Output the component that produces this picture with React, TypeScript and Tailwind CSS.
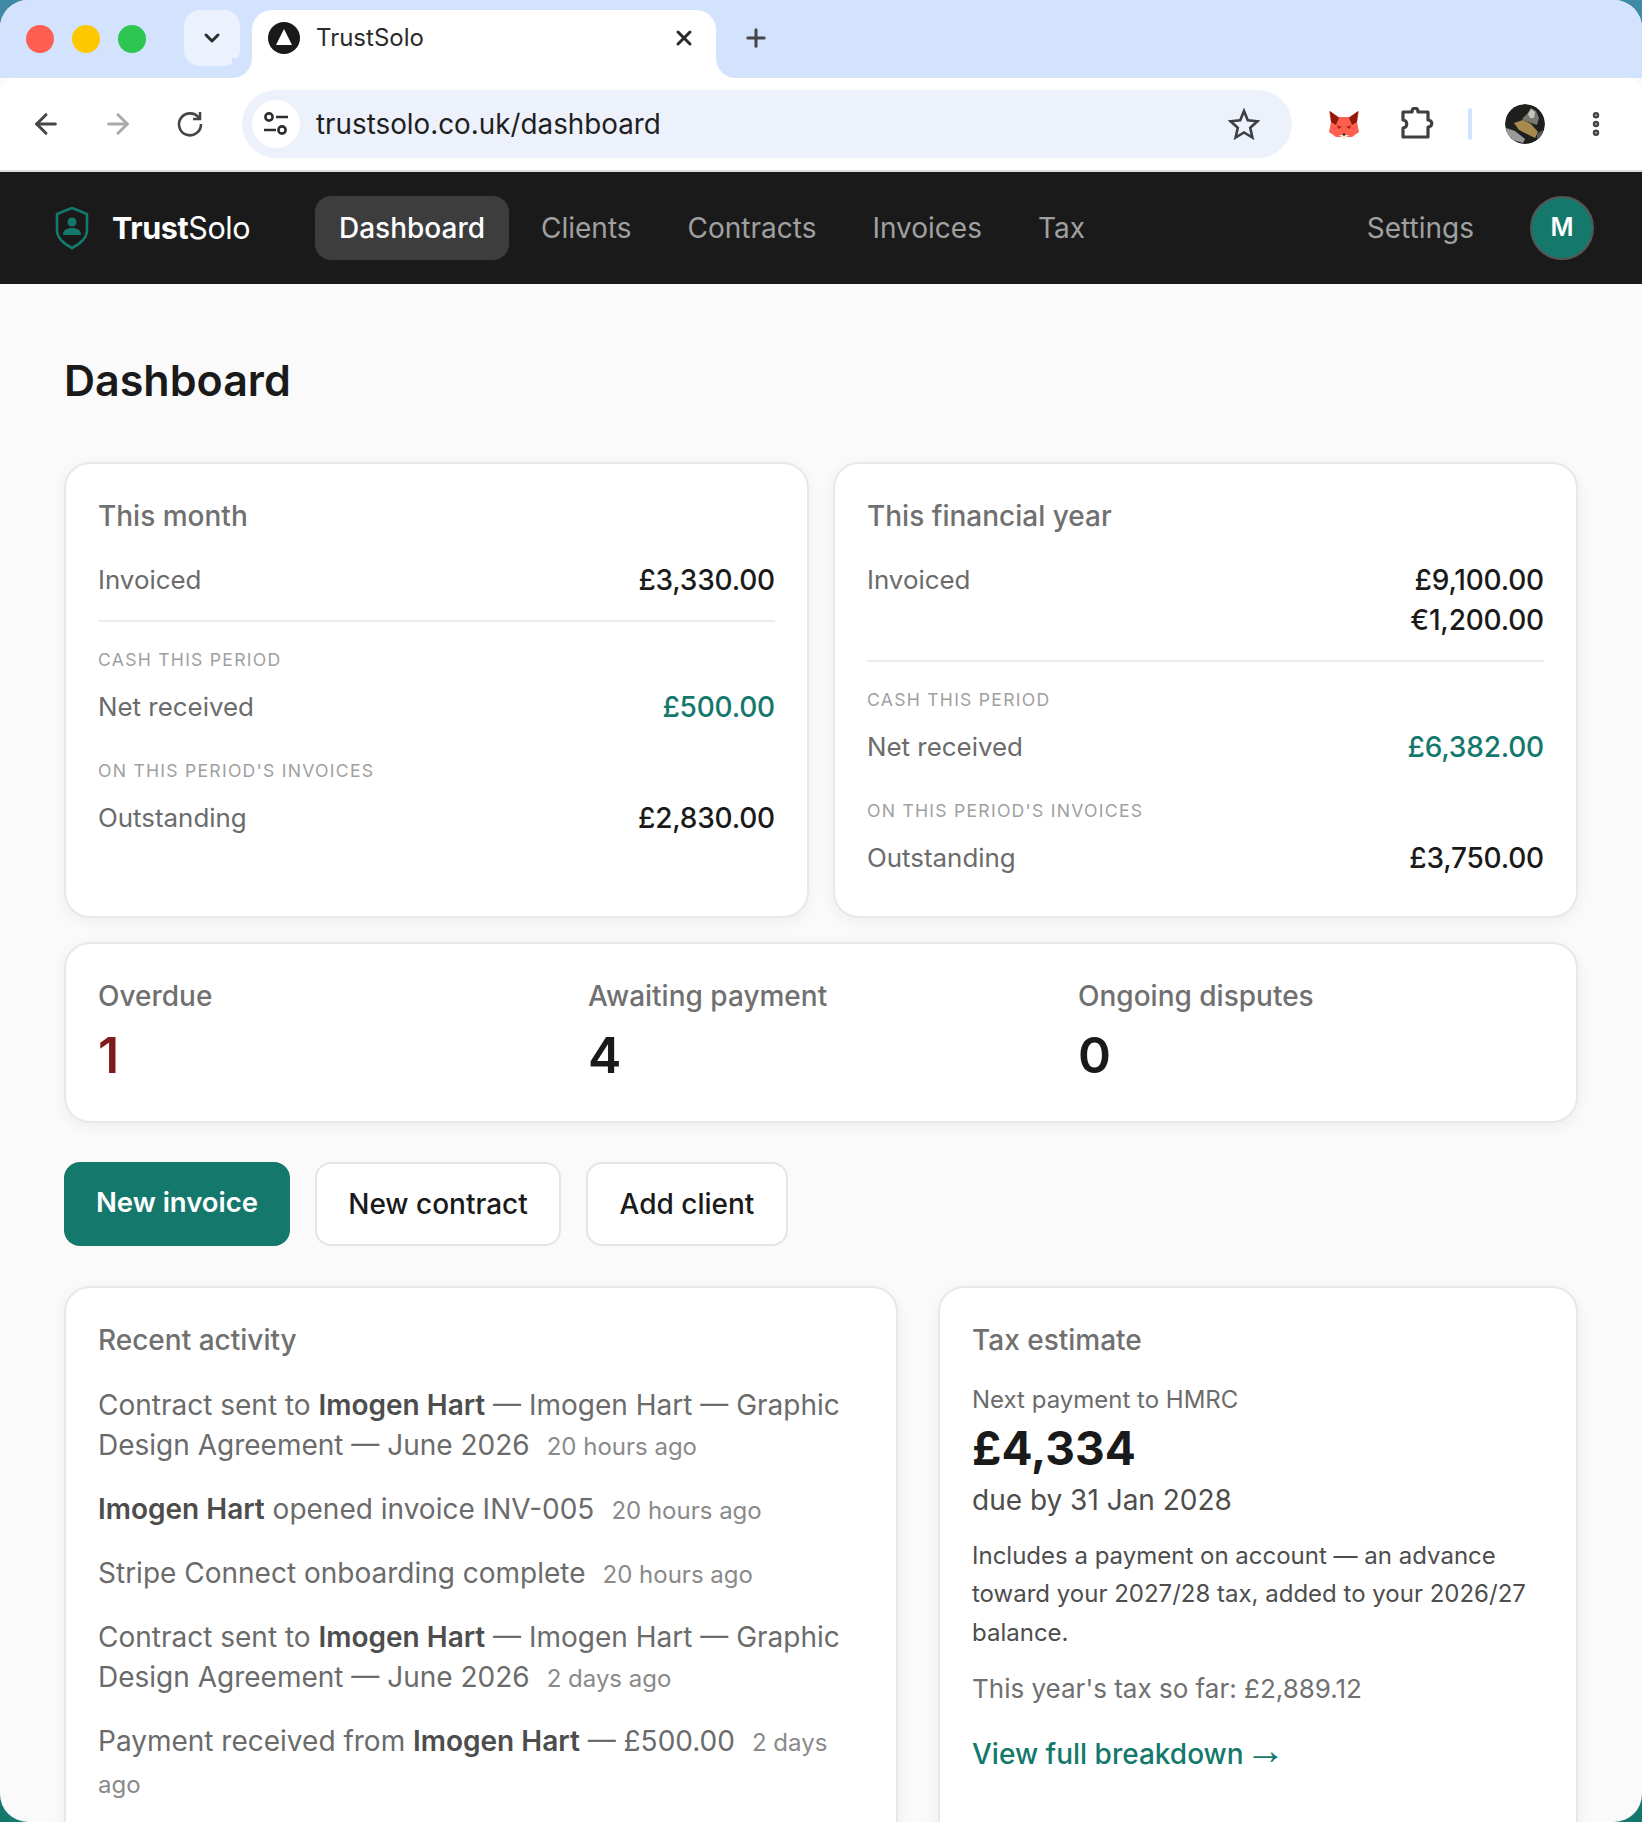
import { ArrowLeft, ArrowRight, ChevronDown, MoreVertical, Plus, X } from 'lucide-react';
import type { ReactNode } from 'react';

const sans = 'font-["Inter",sans-serif]';

const Card = ({ className = '', children }: { className?: string; children: ReactNode }) => (
  <div className={`rounded-[26px] border-2 border-[#e8e8e8] bg-white px-[32px] py-[33px] shadow-[0_4px_16px_rgba(0,0,0,0.05)] ${className}`}>{children}</div>
);

const CardTitle = ({ children }: { children: ReactNode }) => (
  <div className="text-[28px] font-medium leading-[38px] text-[#707070]">{children}</div>
);

const Row = ({ label, values, color = 'text-[#1a1a1a]' }: { label: string; values: string[]; color?: string }) => (
  <div className="flex items-start justify-between">
    <span className="text-[25.9px] leading-[40px] text-[#6b6b6b]">{label}</span>
    <div className="text-right">
      {values.map((v) => (
        <div key={v} className={`text-[28px] font-medium leading-[40px] tracking-[-0.2px] ${color}`}>{v}</div>
      ))}
    </div>
  </div>
);

const Caps = ({ children }: { children: ReactNode }) => (
  <div className="text-[17.6px] leading-[24px] tracking-[1.25px] text-[#a0a0a0]">{children}</div>
);

const PeriodCard = ({ title, invoiced, net, outstanding }: { title: string; invoiced: string[]; net: string; outstanding: string }) => (
  <Card className="h-[456px]">
    <CardTitle>{title}</CardTitle>
    <div className="mt-[25px]"><Row label="Invoiced" values={invoiced} /></div>
    <div className="mt-[20px] h-[2px] bg-[#ececec]" />
    <div className="mt-[26px]"><Caps>CASH THIS PERIOD</Caps></div>
    <div className="mt-[15px]"><Row label="Net received" values={[net]} color="text-[#14786c]" /></div>
    <div className="mt-[32px]"><Caps>ON THIS PERIOD'S INVOICES</Caps></div>
    <div className="mt-[15px]"><Row label="Outstanding" values={[outstanding]} /></div>
  </Card>
);

const Stat = ({ label, value, color = 'text-[#1a1a1a]' }: { label: string; value: string; color?: string }) => (
  <div>
    <CardTitle>{label}</CardTitle>
    <div className={`mt-[12px] text-[50px] font-semibold leading-[56px] ${color}`}>{value}</div>
  </div>
);

const Activity = ({ children, when }: { children: ReactNode; when: string }) => (
  <p className="text-[28px] leading-[40px] text-[#6b6b6b]">
    {children}
    <span className="ml-[17px] text-[24px] text-[#8a8a8a]">{when}</span>
  </p>
);

const Strong = ({ children }: { children: ReactNode }) => (
  <strong className="font-semibold text-[#4d4d4d]">{children}</strong>
);

const Fox = () => (
  <svg width="32" height="32" viewBox="0 0 32 32">
    <path d="M1 24 3 14 1 3 11 9H21L31 3 29 14 31 24 24 29H8Z" fill="#ff5f4f" />
    <path d="M2 3 11 10 8 17 3 14Z M30 3 21 10 24 17 29 14Z" fill="#8c1a10" />
    <path d="M9 17 14 19 10 21Z M23 17 18 19 22 21Z" fill="#b3261b" />
    <path d="M11 27H21L16 31Z" fill="#f2e6e2" />
    <circle cx="16" cy="26.5" r="1.2" fill="#222" />
  </svg>
);

const Puzzle = () => (
  <svg width="34" height="34" viewBox="0 0 34 34" fill="none" stroke="#3c4043" strokeWidth="3.2" strokeLinejoin="round">
    <path d="M3 5H12C12 0 18 0 18 5H28V13C33 13 33 20 28 20V30H3V21C8 21 8 13 3 13Z" />
  </svg>
);

const Avatar = () => (
  <svg width="40" height="40" viewBox="0 0 40 40" className="rounded-full">
    <circle cx="20" cy="20" r="20" fill="#1f201e" />
    <path d="M9 19 18 16 26 20 33 28 30 34 22 30 14 26Z" fill="#a88a4e" />
    <path d="M17 15 22 10 26 4 31 7 34 14 32 21 26 19 20 17Z" fill="#77786f" />
    <path d="M23 10 26 5 30 8 29 14 25 14Z" fill="#c4c4be" />
    <path d="M1 24 10 27 20 35 18 39 8 36 2 30Z" fill="#9a9b96" />
    <path d="M32 30 38 26 37 33 32 36Z" fill="#5b5c58" />
  </svg>
);

const Shield = () => (
  <svg width="34" height="44" viewBox="0 0 34 44" fill="none">
    <path d="M17 2 32 8V24C32 33 25 38 17 42 9 38 2 33 2 24V8Z" stroke="#14786c" strokeWidth="2.6" strokeLinejoin="round" />
    <circle cx="17" cy="16" r="4.5" fill="#14786c" />
    <path d="M8 29C8 24 12 22 17 22S26 24 26 29Z" fill="#14786c" />
  </svg>
);

const Chrome = () => (
  <div>
    {/* tab strip */}
    <div className="flex h-[78px] items-start bg-[#d3e3fd]">
      <div className="flex h-[78px] items-center gap-[18px] pl-[26px]">
        <span className="h-[28px] w-[28px] rounded-full bg-[#ff5f52]" />
        <span className="h-[28px] w-[28px] rounded-full bg-[#fdc800]" />
        <span className="h-[28px] w-[28px] rounded-full bg-[#2dc653]" />
      </div>
      <div className="ml-[38px] mt-[10px] flex h-[56px] w-[56px] items-center justify-center rounded-[16px] bg-[#ebf1fd]">
        <ChevronDown size={24} strokeWidth={3} color="#2d2d2d" />
      </div>
      <div className="relative ml-[12px] mt-[10px] flex h-[68px] w-[464px] items-start rounded-t-[20px] bg-white pl-[16px] pr-[20px] pt-[12px]">
        {/* concave feet of the tab */}
        <span className="absolute bottom-0 left-[-20px] h-[20px] w-[20px] bg-white"><span className="block h-full w-full rounded-br-[20px] bg-[#d3e3fd]" /></span>
        <span className="absolute bottom-0 right-[-20px] h-[20px] w-[20px] bg-white"><span className="block h-full w-full rounded-bl-[20px] bg-[#d3e3fd]" /></span>
        <svg width="32" height="32" viewBox="0 0 32 32">
          <circle cx="16" cy="16" r="16" fill="#1a1a1a" />
          <path d="M16 7 24 23H8Z" fill="#fff" />
        </svg>
        <span className="ml-[16px] text-[24px] leading-[32px] text-[#2b2b2b]">TrustSolo</span>
        <X size={24} strokeWidth={3} color="#2b2b2b" className="ml-auto mt-[4px]" />
      </div>
      <Plus size={28} strokeWidth={2.6} color="#444746" className="ml-[26px] mt-[24px]" />
    </div>
    {/* toolbar */}
    <div className="flex h-[94px] items-center rounded-t-[16px] border-b-2 border-[#dcdcdc] bg-white pl-[30px]">
      <ArrowLeft size={32} strokeWidth={2.2} color="#444746" />
      <ArrowRight size={32} strokeWidth={2.2} color="#aaaaaa" className="ml-[40px]" />
      <svg width="28" height="28" viewBox="0 0 28 28" fill="none" stroke="#444746" strokeWidth="2.6" className="ml-[42px]">
        <path d="M23 8A11 11 0 1 0 25 14" />
        <path d="M24 2V9H17" />
      </svg>
      <div className="ml-[38px] flex h-[68px] w-[1050px] items-center rounded-full bg-[#ecf1fb] pl-[10px] pr-[32px]">
        <div className="flex h-[48px] w-[48px] items-center justify-center rounded-full bg-white">
          <svg width="28" height="28" viewBox="0 0 28 28" fill="none" stroke="#2d2d2d" strokeWidth="2.6">
            <circle cx="7" cy="7" r="3.6" />
            <path d="M14 7H26M2 20H14" />
            <circle cx="20" cy="20" r="3.6" />
          </svg>
        </div>
        <span className="ml-[16px] pt-[2px] text-[27.8px] text-[#1f1f1f]">trustsolo.co.uk/dashboard</span>
        <svg width="32" height="32" viewBox="0 0 32 32" fill="none" stroke="#3c4043" strokeWidth="2.6" className="ml-auto">
          <path d="M16 3 19.8 12.3 29.5 13.2 22.2 19.8 24.4 29.5 16 24.4 7.6 29.5 9.8 19.8 2.5 13.2 12.2 12.3Z" />
        </svg>
      </div>
      <div className="ml-[36px]"><Fox /></div>
      <div className="ml-[40px]"><Puzzle /></div>
      <span className="ml-[34px] h-[32px] w-[4px] rounded bg-[#d3e3fd]" />
      <div className="ml-[33px]"><Avatar /></div>
      <MoreVertical size={30} strokeWidth={3.2} color="#444746" className="ml-[36px]" />
    </div>
  </div>
);

const Nav = () => (
  <div className="flex h-[112px] items-center bg-[#1a1a1a] pl-[55px] pr-[48px]">
    <Shield />
    <span className="ml-[23px] w-[139px] text-[30.5px] tracking-[-0.4px] text-white"><span className="font-bold">Trust</span>Solo</span>
    <div className="ml-[64px] flex h-[64px] w-[194px] items-center justify-center rounded-[16px] bg-[#3d3d3d] text-[28px] font-medium text-white">Dashboard</div>
    <div className="flex gap-[56px] pl-[32px] text-[28px] text-[#a0a0a0]">
      <span>Clients</span>
      <span>Contracts</span>
      <span>Invoices</span>
      <span>Tax</span>
    </div>
    <span className="ml-auto text-[28px] text-[#a0a0a0]">Settings</span>
    <div className="ml-[56px] flex h-[64px] w-[64px] items-center justify-center rounded-full border-2 border-[#555] bg-[#14786c] text-[25px] font-semibold text-white">M</div>
  </div>
);

export default function App() {
  return (
    <div className="h-[1822px] w-[1642px] overflow-hidden bg-gradient-to-b from-[#3f8ba5] to-[#14786c]">
      <div className={`h-full overflow-hidden rounded-[28px] bg-[#fafafa] ${sans}`}>
        <Chrome />
        <Nav />
        <main className="px-[64px] pt-[64px]">
          <h1 className="text-[43px] font-semibold leading-[64px] text-[#1a1a1a]">Dashboard</h1>
          <div className="mt-[50px] grid grid-cols-2 gap-[24px]">
            <PeriodCard title="This month" invoiced={['£3,330.00']} net="£500.00" outstanding="£2,830.00" />
            <PeriodCard title="This financial year" invoiced={['£9,100.00', '€1,200.00']} net="£6,382.00" outstanding="£3,750.00" />
          </div>
          <Card className="mt-[24px] grid h-[181px] grid-cols-3 gap-[24px]">
            <Stat label="Overdue" value="1" color="text-[#7f1d1d]" />
            <Stat label="Awaiting payment" value="4" />
            <Stat label="Ongoing disputes" value="0" />
          </Card>
          <div className="mt-[39px] flex gap-[25px]">
            <button className="h-[84px] w-[226px] rounded-[16px] bg-[#14786c] pb-[3px] text-[27.5px] font-semibold text-white">New invoice</button>
            <button className="h-[84px] w-[246px] rounded-[16px] border-2 border-[#e5e5e5] bg-white text-[28px] font-medium text-[#1a1a1a]">New contract</button>
            <button className="h-[84px] w-[202px] rounded-[16px] border-2 border-[#e5e5e5] bg-white text-[28px] font-medium text-[#1a1a1a]">Add client</button>
          </div>
          <div className="mt-[40px] grid grid-cols-[834px_640px] gap-[40px]">
            <Card className="h-[700px]">
              <CardTitle>Recent activity</CardTitle>
              <div className="mt-[26px] flex flex-col gap-[22px]">
                <Activity when="20 hours ago">Contract sent to <Strong>Imogen Hart</Strong> — Imogen Hart — Graphic Design Agreement — June 2026</Activity>
                <Activity when="20 hours ago"><Strong>Imogen Hart</Strong> opened invoice INV-005</Activity>
                <Activity when="20 hours ago">Stripe Connect onboarding complete</Activity>
                <Activity when="2 days ago">Contract sent to <Strong>Imogen Hart</Strong> — Imogen Hart — Graphic Design Agreement — June 2026</Activity>
                <Activity when="2 days ago">Payment received from <Strong>Imogen Hart</Strong> — £500.00</Activity>
              </div>
            </Card>
            <Card className="h-[700px]">
              <CardTitle>Tax estimate</CardTitle>
              <div className="mt-[23px] text-[24px] leading-[36px] text-[#6b6b6b]">Next payment to HMRC</div>
              <div className="mt-[2px] text-[46px] font-bold leading-[56px] text-[#1a1a1a]">£4,334</div>
              <div className="mt-[4px] text-[28px] leading-[40px] text-[#4d4d4d]">due by 31 Jan 2028</div>
              <p className="mt-[17px] text-[24px] leading-[38.4px] text-[#4d4d4d]">Includes a payment on account — an advance toward your 2027/28 tax, added to your 2026/27 balance.</p>
              <div className="mt-[19px] text-[26px] leading-[36px] text-[#707070]">This year's tax so far: £2,889.12</div>
              <div className="mt-[27px] text-[28px] font-medium leading-[40px] text-[#14786c]">View full breakdown <span className='ml-[-6px] font-["Liberation_Sans",sans-serif] text-[40px] font-normal leading-[0]'>→</span></div>
            </Card>
          </div>
        </main>
      </div>
    </div>
  );
}
